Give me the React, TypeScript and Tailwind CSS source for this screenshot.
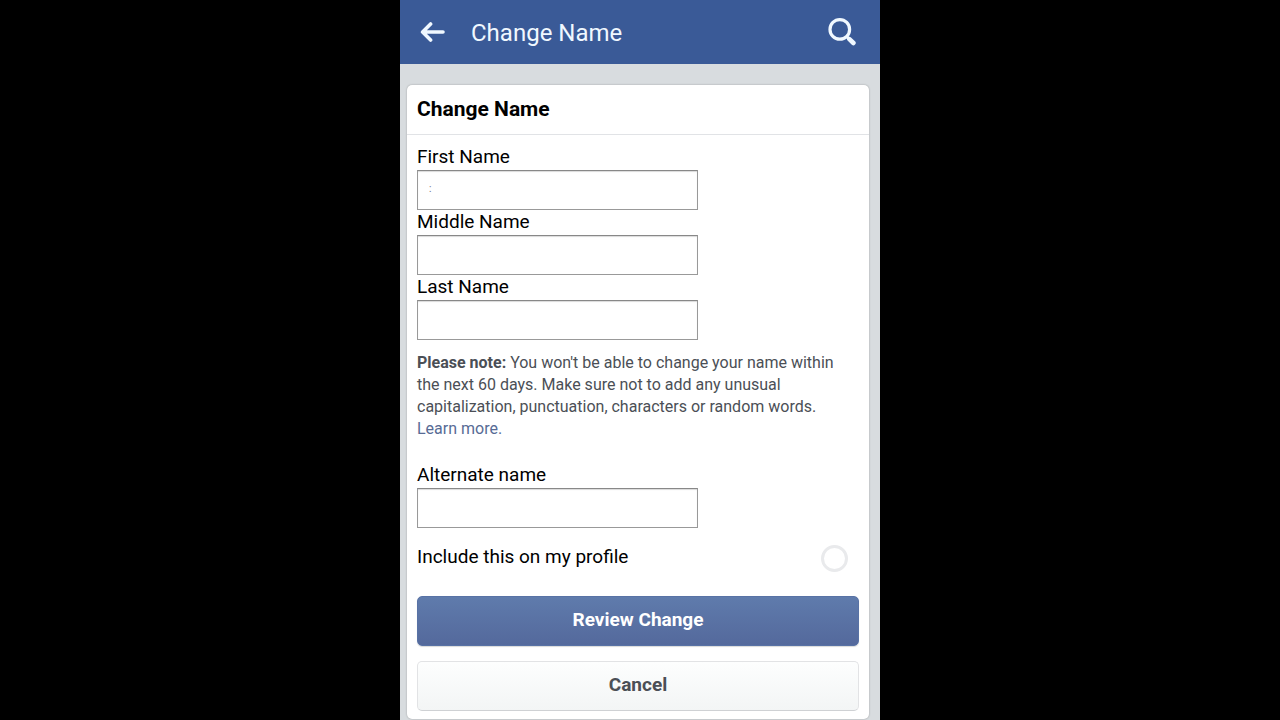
import * as React from "react";

const NAME_FIELDS = [
  { id: "first-name", label: "First Name", value: ":" },
  { id: "middle-name", label: "Middle Name", value: "" },
  { id: "last-name", label: "Last Name", value: "" },
];

function Field({ id, label, value }: { id: string; label: string; value: string }) {
  return (
    <div className="flex flex-col">
      <label htmlFor={id} className="mb-0.5 text-[19px] leading-[23px] text-black">
        {label}
      </label>
      <input
        id={id}
        type="text"
        defaultValue={value}
        className="h-10 w-full max-w-[281px] border border-[#999] border-t-[#888] bg-white px-[11px] pb-1 text-[10px] text-gray-500 shadow-[inset_0_1px_1px_rgba(0,0,0,0.15)] outline-none"
      />
    </div>
  );
}

function BackIcon() {
  return (
    <svg viewBox="0 0 25 20" className="h-5 w-[25px]" fill="none" stroke="currentColor" strokeWidth="3.6" strokeLinecap="round" strokeLinejoin="round">
      <path d="M10.6 2 2.6 10l8 8M4 10h19" />
    </svg>
  );
}

function SearchIcon() {
  return (
    <svg viewBox="0 0 28 28" className="size-7" fill="none" stroke="currentColor" strokeLinecap="round">
      <circle cx="11.8" cy="11.4" r="9.8" strokeWidth="3.2" />
      <path d="M19.2 19 21 20.8" strokeWidth="3" />
      <path d="m21.4 21.2 4 3.8" strokeWidth="4.6" />
    </svg>
  );
}

export default function App() {
  return (
    <div className="min-h-screen bg-black font-[Roboto,sans-serif]">
      <div className="mx-auto min-h-screen w-full max-w-[480px] bg-[#d8dcdf]">
        {/* TOP BAR */}
        <header className="flex h-16 items-center bg-[#3a5a97] pl-5 pr-6 text-[#f0f8ff]">
          <button type="button" aria-label="Back">
            <BackIcon />
          </button>
          <h1 className="ml-[26px] pt-0.5 text-[24px] leading-8">Change Name</h1>
          <button type="button" aria-label="Search" className="ml-auto">
            <SearchIcon />
          </button>
        </header>

        {/* FORM CARD */}
        <main className="pl-[7px] pr-[11px] pt-[21px]">
          <form className="rounded-[5px] bg-white shadow-[0_0_2px_rgba(0,0,0,0.3)]" onSubmit={(e) => e.preventDefault()}>
            <h2 className="h-[50px] border-b border-[#e1e3e6] px-[10px] text-[21px] font-bold leading-[48px] text-black">
              Change Name
            </h2>

            <div className="px-[10px] pb-2 pt-[10px]">
              {NAME_FIELDS.map((field) => (
                <Field key={field.id} {...field} />
              ))}

              <p className="mt-3 text-[16px] leading-[22px] text-[#4b4f56]">
                <strong className="font-bold">Please note:</strong> You won't be able to change your name within the
                next 60 days. Make sure not to add any unusual capitalization, punctuation, characters or random words.{" "}
                <a href="#" className="text-[#576b95]">
                  Learn more.
                </a>
              </p>

              <div className="mt-[23px]">
                <Field id="alternate-name" label="Alternate name" value="" />
              </div>

              <div className="mt-4 flex h-7 items-center justify-between pr-[11px]">
                <label htmlFor="include" className="pb-1 text-[19px] leading-[23px] text-black">
                  Include this on my profile
                </label>
                <input
                  id="include"
                  type="checkbox"
                  className="size-[27px] appearance-none rounded-full border-3 border-[#e9eaec] bg-white checked:bg-[#5b74a8]"
                />
              </div>

              <button
                type="submit"
                className="mt-6 h-[50px] w-full rounded-[5px] border border-[#5872a5] bg-linear-to-b from-[#5f7bac] to-[#54699c] pb-0.5 text-[19px] font-bold text-white shadow-[0_1px_1px_rgba(0,0,0,0.15)]"
              >
                Review Change
              </button>
              <button
                type="button"
                className="mt-[15px] h-[50px] w-full rounded-[5px] border border-[#e2e3e5] border-b-[#cfd1d4] bg-linear-to-b from-[#fdfefe] to-[#f3f5f5] pb-0.5 text-[19px] font-bold text-[#4b4f56]"
              >
                Cancel
              </button>
            </div>
          </form>
        </main>
      </div>
    </div>
  );
}
